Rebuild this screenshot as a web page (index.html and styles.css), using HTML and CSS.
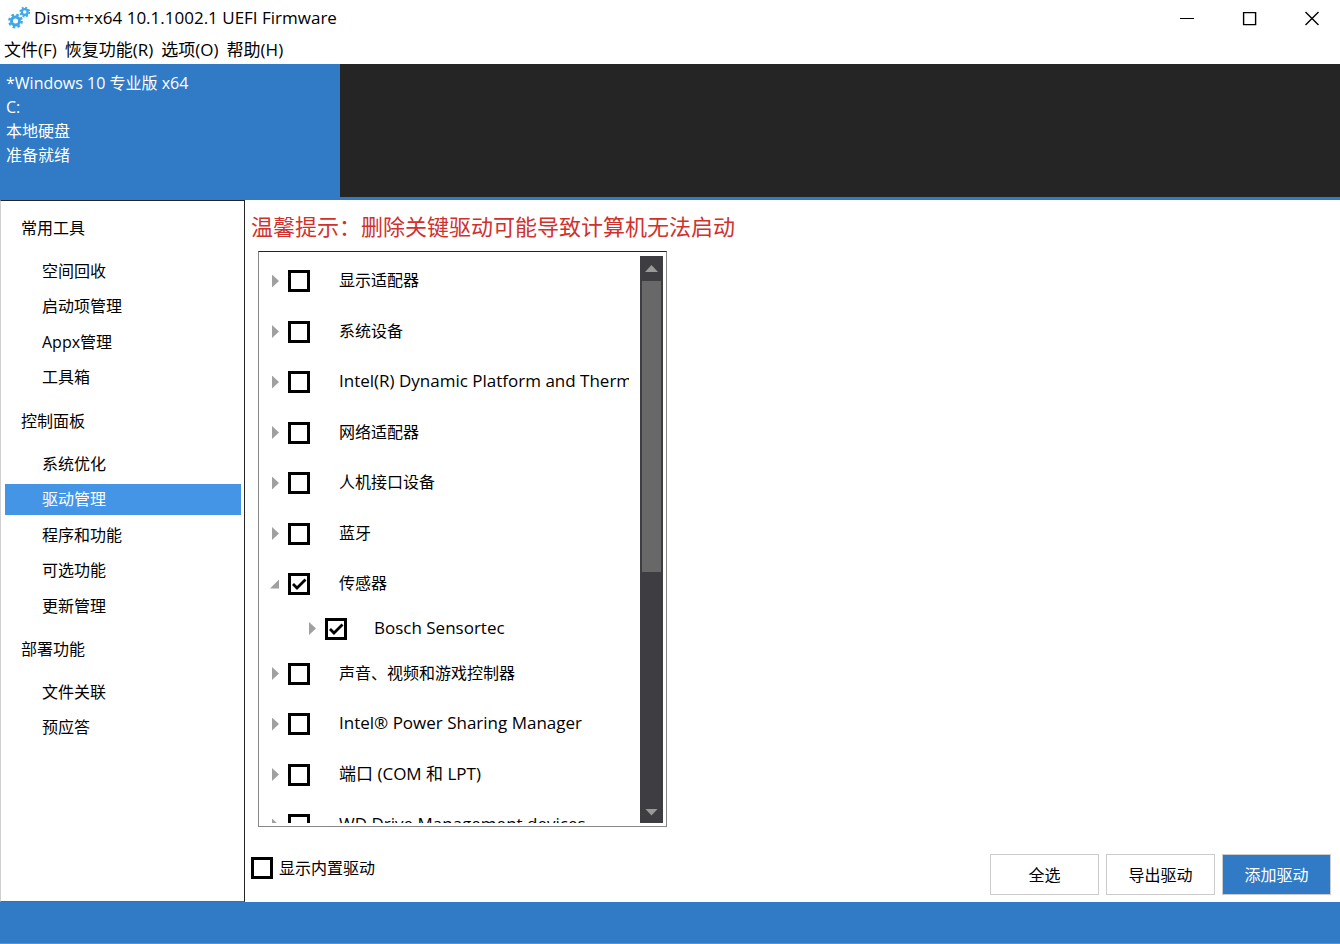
FILE: index.html
```
<!DOCTYPE html>
<html lang="zh-CN">
<head>
    <meta charset="UTF-8">
    <meta name="viewport" content="width=device-width, initial-scale=1.0">
    <title>Dism++x64 10.1.1002.1 UEFI Firmware</title>
    <link rel="stylesheet" href="styles.css">
</head>
<body>
    <header class="titlebar">
        <svg class="logo" viewBox="0 0 24 24" width="24" height="24">
            <g fill="none" stroke="#3fa9e6">
                <circle cx="8.500" cy="15" r="4" stroke-width="3"/>
                <circle cx="8.500" cy="15" r="6.200" stroke-width="2.400" stroke-dasharray="2.600 2.270"/>
                <circle cx="17.700" cy="6" r="2.900" stroke-width="2.200"/>
                <circle cx="17.700" cy="6" r="4.500" stroke-width="1.800" stroke-dasharray="1.900 1.634"/>
            </g>
        </svg>
        <h1 class="title">Dism++x64 10.1.1002.1 UEFI Firmware</h1>
        <div class="window-buttons">
            <button type="button" aria-label="最小化"><svg viewBox="0 0 16 16" width="16" height="16"><path d="M0 8.500h14"/></svg></button>
            <button type="button" aria-label="最大化"><svg viewBox="0 0 16 16" width="16" height="16"><path d="M1.600 2.600h12v12h-12z" stroke-width="1.400"/></svg></button>
            <button type="button" aria-label="关闭"><svg viewBox="0 0 16 16" width="16" height="16"><path d="M1.500 2l13 13M14.500 2l-13 13" stroke-width="1.400"/></svg></button>
        </div>
    </header>
    <nav class="menu">
        <button type="button">文件(F)</button>
        <button type="button">恢复功能(R)</button>
        <button type="button">选项(O)</button>
        <button type="button">帮助(H)</button>
    </nav>
    <section class="systems">
        <div class="system">
            <p>*Windows 10 专业版 x64</p>
            <p>C:</p>
            <p>本地硬盘</p>
            <p>准备就绪</p>
        </div>
    </section>
    <div class="main">
        <nav class="sidebar">
            <h2>常用工具</h2>
            <ul>
                <li><a href="#">空间回收</a></li>
                <li><a href="#">启动项管理</a></li>
                <li><a href="#">Appx管理</a></li>
                <li><a href="#">工具箱</a></li>
            </ul>
            <h2>控制面板</h2>
            <ul>
                <li><a href="#">系统优化</a></li>
                <li><a class="active" href="#">驱动管理</a></li>
                <li><a href="#">程序和功能</a></li>
                <li><a href="#">可选功能</a></li>
                <li><a href="#">更新管理</a></li>
            </ul>
            <h2>部署功能</h2>
            <ul>
                <li><a href="#">文件关联</a></li>
                <li><a href="#">预应答</a></li>
            </ul>
        </nav>
        <main class="content">
            <p class="warning">温馨提示：删除关键驱动可能导致计算机无法启动</p>
            <div class="tree-box">
                <ul class="tree">
                    <li><div class="row"><button type="button" class="arrow" aria-label="展开"></button><input type="checkbox" id="d1"><label for="d1">显示适配器</label></div></li>
                    <li><div class="row"><button type="button" class="arrow" aria-label="展开"></button><input type="checkbox" id="d2"><label for="d2">系统设备</label></div></li>
                    <li><div class="row"><button type="button" class="arrow" aria-label="展开"></button><input type="checkbox" id="d3"><label class="latin" for="d3">Intel(R) Dynamic Platform and Thermal Framework</label></div></li>
                    <li><div class="row"><button type="button" class="arrow" aria-label="展开"></button><input type="checkbox" id="d4"><label for="d4">网络适配器</label></div></li>
                    <li><div class="row"><button type="button" class="arrow" aria-label="展开"></button><input type="checkbox" id="d5"><label for="d5">人机接口设备</label></div></li>
                    <li><div class="row"><button type="button" class="arrow" aria-label="展开"></button><input type="checkbox" id="d6"><label for="d6">蓝牙</label></div></li>
                    <li>
                        <div class="row"><button type="button" class="arrow open" aria-label="折叠"></button><input type="checkbox" id="d7" checked><label for="d7">传感器</label></div>
                        <ul class="children">
                            <li><div class="row"><button type="button" class="arrow" aria-label="展开"></button><input type="checkbox" id="d8" checked><label class="latin" for="d8">Bosch Sensortec</label></div></li>
                        </ul>
                    </li>
                    <li><div class="row"><button type="button" class="arrow" aria-label="展开"></button><input type="checkbox" id="d9"><label for="d9">声音、视频和游戏控制器</label></div></li>
                    <li><div class="row"><button type="button" class="arrow" aria-label="展开"></button><input type="checkbox" id="d10"><label class="latin" for="d10">Intel® Power Sharing Manager</label></div></li>
                    <li><div class="row"><button type="button" class="arrow" aria-label="展开"></button><input type="checkbox" id="d11"><label class="latin" for="d11">端口 (COM 和 LPT)</label></div></li>
                    <li><div class="row"><button type="button" class="arrow" aria-label="展开"></button><input type="checkbox" id="d12"><label class="latin" for="d12">WD Drive Management devices</label></div></li>
                </ul>
                <div class="scrollbar">
                    <button type="button" class="scroll-up" aria-label="向上"></button>
                    <div class="track"><div class="thumb"></div></div>
                    <button type="button" class="scroll-down" aria-label="向下"></button>
                </div>
            </div>
            <div class="actions">
                <div class="builtin">
                    <input type="checkbox" id="builtin">
                    <label for="builtin">显示内置驱动</label>
                </div>
                <button type="button" class="btn">全选</button>
                <button type="button" class="btn">导出驱动</button>
                <button type="button" class="btn primary">添加驱动</button>
            </div>
        </main>
    </div>
    <footer class="statusbar"></footer>
</body>
</html>
```
FILE: styles.css
```
* {
    box-sizing: border-box;
    margin: 0;
    padding: 0;
}
body {
    display: flex;
    flex-direction: column;
    height: 100vh;
    background-color: #fff;
    color: #000;
    font-family: "Open Sans", "Noto Sans CJK SC", sans-serif;
    font-size: 16px;
    line-height: 24px;
}
button {
    border: none;
    background: none;
    color: inherit;
    font: inherit;
}
ul {
    list-style: none;
}
.titlebar {
    display: flex;
    flex: none;
    align-items: center;
    height: 36px;
    padding-left: 7px;
}
.logo {
    margin-right: 3px;
}
.title {
    font-size: 17px;
    font-weight: normal;
}
.window-buttons {
    display: flex;
    gap: 6px;
    margin-left: auto;
}
.window-buttons button {
    width: 56px;
    height: 34px;
}
.window-buttons svg {
    display: block;
    margin: 0 auto;
    fill: none;
    stroke: #000;
}
.menu {
    display: flex;
    flex: none;
    gap: 8px;
    height: 28px;
    padding: 2px 4px;
    font-size: 17px;
}
.systems {
    display: flex;
    flex: none;
    height: 136px;
    background: linear-gradient(#307ac6, #307ac6) bottom / 100% 3px no-repeat #252525;
}
.system {
    width: 340px;
    padding: 7px 6px;
    background-color: #307ac6;
    color: #fff;
}
.main {
    display: flex;
    flex: 1;
    min-height: 0;
}
.sidebar {
    flex: none;
    width: 245px;
    padding: 12px 3px 0 4px;
    border: 1px solid #252525;
    border-left-color: #d0d0d0;
    border-bottom-color: #666;
}
.sidebar h2 {
    margin-bottom: 13px;
    padding-left: 16px;
    font-size: 16px;
    font-weight: normal;
    line-height: 30px;
}
.sidebar ul {
    display: flex;
    flex-direction: column;
    gap: 5px;
    margin-bottom: 13px;
}
.sidebar a {
    display: block;
    padding-left: 37px;
    color: #000;
    line-height: 30px;
    text-decoration: none;
}
.sidebar li:nth-child(even) a {
    line-height: 31px;
}
.sidebar a.active {
    background-color: #4595e7;
    color: #fff;
}
.content {
    display: flex;
    flex: 1;
    flex-direction: column;
    min-width: 0;
    padding: 12px 9px 7px 6px;
}
.warning {
    color: #d0312d;
    font-size: 22px;
    line-height: 28px;
}
.tree-box {
    display: flex;
    flex: 1;
    width: 409px;
    min-height: 0;
    margin: 11px 0 27px 7px;
    padding: 4px 3px 3px;
    border: 1px solid #888;
    border-top-color: #252525;
}
.tree {
    display: flex;
    flex: 1;
    flex-direction: column;
    gap: 4px;
    min-width: 0;
    padding: 2px 11px 0 10px;
    overflow: hidden;
}
.row {
    display: flex;
    align-items: center;
    height: 46px;
}
.tree > li:nth-child(even) > .row {
    height: 47px;
}
.row label {
    flex: 1;
    margin-left: 29px;
    padding-bottom: 2px;
    overflow: hidden;
    white-space: nowrap;
}
.row .latin {
    font-size: 17px;
}
.children {
    margin-top: 4px;
    padding-left: 37px;
}
.children .row {
    height: 35px;
}
.children .row label {
    margin-left: 27px;
}
.arrow {
    flex: none;
    width: 7px;
    height: 13px;
    margin-right: 9px;
    background-color: #a0a0a0;
    clip-path: polygon(0 0, 100% 50%, 0 100%);
}
.arrow.open {
    width: 9px;
    height: 9px;
    margin-left: -2px;
    clip-path: polygon(100% 0, 100% 100%, 0 100%);
}
input[type="checkbox"] {
    flex: none;
    width: 22px;
    height: 22px;
    border: 3px solid #000;
    background-color: #fff;
    appearance: none;
}
input[type="checkbox"]:checked {
    background: url("data:image/svg+xml,%3Csvg xmlns='http://www.w3.org/2000/svg' viewBox='0 0 16 16'%3E%3Cpath d='M2 8l4 4 8.500-8.500' fill='none' stroke='black' stroke-width='2.800'/%3E%3C/svg%3E") center / 16px 16px no-repeat;
}
.scrollbar {
    display: flex;
    flex: none;
    flex-direction: column;
    width: 23px;
    background-color: #3e3e42;
}
.scroll-up,
.scroll-down {
    display: flex;
    flex: none;
    align-items: center;
    justify-content: center;
    height: 25px;
}
.scroll-down {
    height: 22px;
}
.scroll-up::before,
.scroll-down::before {
    width: 13px;
    height: 7px;
    background-color: #999;
    content: "";
    clip-path: polygon(50% 0, 100% 100%, 0 100%);
}
.scroll-down::before {
    clip-path: polygon(0 0, 100% 0, 50% 100%);
}
.track {
    flex: 1;
    padding: 0 2px;
}
.thumb {
    height: 56%;
    background-color: #686868;
}
.actions {
    display: flex;
    flex: none;
    gap: 7px;
}
.builtin {
    display: flex;
    gap: 6px;
    align-items: center;
    height: 28px;
    margin-right: auto;
}
.btn {
    width: 109px;
    height: 41px;
    border: 1px solid #ccc;
    background-color: #fff;
}
.btn.primary {
    background-color: #307ac6;
    color: #fff;
}
.statusbar {
    flex: none;
    height: 42px;
    border-bottom: 1px solid #888;
    background-color: #307ac6;
}
```
